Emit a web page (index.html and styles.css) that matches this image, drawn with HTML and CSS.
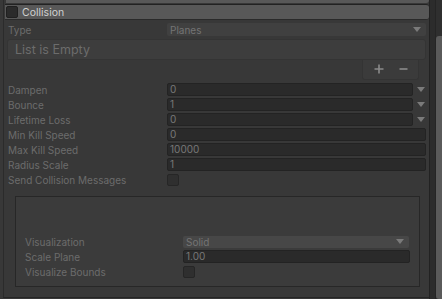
FILE: index.html
```html
<!DOCTYPE html>
<html>
<head>
<meta charset="utf-8">
<link rel="stylesheet" href="styles.css">
</head>
<body>
<div class="frame">
  <div class="main">
    <div class="prev"></div>
    <div class="header">
      <span class="check"></span>
      <span class="title">Collision</span>
    </div>
    <div class="content">
      <div class="row">
        <span class="label">Type</span>
        <div class="popup"><span>Planes</span><span class="arrow"></span></div>
      </div>
      <div class="list">List is Empty</div>
      <div class="list-foot">
        <svg class="pm" width="10" height="10" viewBox="0 0 10 10"><path d="M5 0.5V9.5M0.5 5H9.5" stroke="#8b8b8b" stroke-width="1.6"/></svg>
        <svg class="pm" width="9" height="10" viewBox="0 0 9 10"><path d="M0.5 5H8.5" stroke="#8b8b8b" stroke-width="1.6"/></svg>
      </div>
      <div class="fields">
        <div class="row">
          <span class="label">Dampen</span>
          <div class="curve"><div class="field">0</div><span class="arrow"></span></div>
        </div>
        <div class="row">
          <span class="label">Bounce</span>
          <div class="curve"><div class="field">1</div><span class="arrow"></span></div>
        </div>
        <div class="row">
          <span class="label">Lifetime Loss</span>
          <div class="curve"><div class="field">0</div><span class="arrow"></span></div>
        </div>
        <div class="row">
          <span class="label">Min Kill Speed</span>
          <div class="field wide">0</div>
        </div>
        <div class="row">
          <span class="label">Max Kill Speed</span>
          <div class="field wide">10000</div>
        </div>
        <div class="row">
          <span class="label">Radius Scale</span>
          <div class="field wide">1</div>
        </div>
        <div class="row">
          <span class="label">Send Collision Messages</span>
          <span class="box"></span>
        </div>
      </div>
      <div class="group">
        <div class="row inner">
          <span class="label">Visualization</span>
          <div class="popup light"><span>Solid</span><span class="arrow"></span></div>
        </div>
        <div class="row inner">
          <span class="label">Scale Plane</span>
          <div class="field wide">1.00</div>
        </div>
        <div class="row inner">
          <span class="label">Visualize Bounds</span>
          <span class="box"></span>
        </div>
      </div>
    </div>
  </div>
  <div class="gutter"></div>
  <div class="scroll"><div class="thumb"></div></div>
</div>
</body>
</html>
```
FILE: styles.css
```css
* { box-sizing: border-box; }
html, body { margin: 0; padding: 0; }
body {
  width: 442px;
  height: 299px;
  overflow: hidden;
  background: #383838;
  font-family: Inter, "Noto Sans", sans-serif;
  font-size: 10px;
}
.frame { display: flex; height: 299px; }
.main {
  width: 426px;
  flex: none;
  border-left: 1px solid #2b2b2b;
  margin-left: 3px;
  border-bottom: 1px solid #252525;
  height: 298px;
}
.prev {
  height: 3px;
  margin-left: 2px;
  background: #585858;
  border-bottom-right-radius: 3px;
}
.header {
  margin-top: 1px;
  margin-left: 1px;
  height: 16px;
  background: #585858;
  border-top: 1px solid #222;
  border-bottom: 1px solid #2a2a2a;
  border-radius: 0 3px 3px 0;
  display: flex;
  align-items: center;
  padding-left: 1px;
}
.check {
  width: 12px;
  height: 12px;
  background: #2b2b2b;
  border: 1px solid #202020;
  border-radius: 2px;
}
.title { color: #d0d0d0; margin-left: 4px; font-size: 10.5px; }
.content { padding: 2px 0 0 0; }
.row {
  height: 15px;
  display: flex;
  align-items: center;
  padding-left: 4px;
}
.label { width: 159px; color: #6c6c6c; flex: none; white-space: nowrap; }
.popup {
  width: 259px;
  height: 13px;
  background: #404040;
  border-radius: 2px;
  display: flex;
  align-items: center;
  justify-content: space-between;
  padding: 0 5px 0 3px;
  color: #747474;
}
.arrow {
  width: 0; height: 0;
  border-left: 4px solid transparent;
  border-right: 4px solid transparent;
  border-top: 5px solid #7a7a7a;
}
.list {
  margin: 2px 3px 0 3px;
  height: 21px;
  background: #3d3d3d;
  border: 1px solid #343434;
  border-radius: 3px 3px 3px 0;
  color: #6c6c6c;
  font-size: 12.5px;
  padding-left: 7px;
  line-height: 19px;
}
.list-foot {
  margin: 0 10px 0 auto;
  width: 57px;
  height: 20px;
  background: #3b3b3b;
  border: 1px solid #343434;
  border-top: none;
  border-radius: 0 0 3px 3px;
  display: flex;
  align-items: center;
  padding: 0 0 1px 11px;
  gap: 15px;
}
.fields { margin-top: 2px; }
.curve { display: flex; align-items: center; }
.curve .field { width: 246px; }
.curve .arrow { margin-left: 4px; }
.field {
  height: 13px;
  background: #2a2a2a;
  border: 1px solid #232323;
  border-radius: 2px;
  color: #787878;
  padding-left: 2px;
  line-height: 11px;
}
.field.wide { width: 259px; }
.box {
  width: 12px;
  height: 12px;
  background: #2f2f2f;
  border: 1px solid #262626;
  border-radius: 2px;
}
.group {
  margin: 9px 9px 0 11px;
  height: 91px;
  background: #3b3b3b;
  border: 1px solid #272727;
  padding-top: 37px;
}
.row.inner { padding-left: 9px; }
.row.inner .label { width: 158px; }
.popup.light { width: 226px; background: #474747; height: 12px; }
.row.inner .field.wide { width: 227px; }
.gutter { width: 7px; flex: none; background: #2c2c2c; border-left: 1px solid #222; border-right: 1px solid #252525; }
.scroll { flex: 1; background: #2f2f2f; padding-top: 36px; }
.thumb { height: 263px; background: #5a5a5a; border-radius: 3px 0 0 3px; }
```
